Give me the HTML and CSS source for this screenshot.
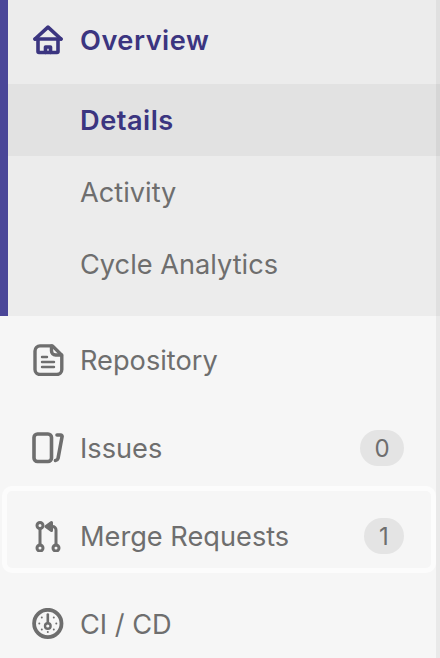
FILE: index.html
```html
<!DOCTYPE html>
<html lang="en">
<head>
<meta charset="utf-8">
<title>Sidebar</title>
<link rel="stylesheet" href="styles.css">
</head>
<body>
<nav class="sidebar">
  <section class="group">
    <a class="row row-head">
      <svg class="icon" viewBox="0 0 32 32" fill="none" stroke="currentColor" stroke-width="3.600" stroke-linejoin="round" stroke-linecap="round"><path d="M3 15 16 3.200 29 15"/><path d="M3 15h26"/><path d="M6 15v12.500a1 1 0 0 0 1 1h18a1 1 0 0 0 1-1V15"/><path d="M13.500 28.500V23h5v5.500"/></svg>
      <span class="label">Overview</span>
    </a>
    <a class="sub sub-active">Details</a>
    <a class="sub">Activity</a>
    <a class="sub">Cycle Analytics</a>
  </section>
  <a class="row">
    <svg class="icon" viewBox="0 0 32 32" fill="none" stroke="currentColor" stroke-width="3.400" stroke-linejoin="round" stroke-linecap="round"><path d="M8 1.900h12.500l9.300 9.300v14.300a5 5 0 0 1-5 5H8a5 5 0 0 1-5-5V6.900a5 5 0 0 1 5-5z"/><path d="M19.500 2v5a4 4 0 0 0 4 4h6"/><path class="thin" d="M10 13h5M10 18h12M10 23h12"/></svg>
    <span class="label">Repository</span>
  </a>
  <a class="row">
    <svg class="icon" viewBox="0 0 32 32" fill="none" stroke="currentColor" stroke-width="3.600" stroke-linejoin="round" stroke-linecap="round"><rect x="2" y="2" width="17.500" height="27.500" rx="3.500"/><path d="M25 3h3.500a1.500 1.500 0 0 1 1.500 2L26 26.500a3 3 0 0 1-2.500 2"/></svg>
    <span class="label">Issues</span>
    <span class="badge">0</span>
  </a>
  <a class="row row-outlined">
    <svg class="icon" viewBox="0 0 32 32" fill="none" stroke="currentColor" stroke-width="3" stroke-linejoin="round" stroke-linecap="round"><circle cx="8" cy="5.500" r="3"/><circle cx="8" cy="28" r="3"/><circle cx="24" cy="28" r="3"/><path d="M8 8.500V25M24 25V10a3.500 3.500 0 0 0-3.500-3.500H17"/><path d="M19.500 2.500 14 6.500l5.500 4z" fill="currentColor"/></svg>
    <span class="label">Merge Requests</span>
    <span class="badge badge-round">1</span>
  </a>
  <a class="row">
    <svg class="icon" viewBox="0 0 32 32" fill="none" stroke="currentColor" stroke-width="3.800" stroke-linecap="round"><circle cx="15.800" cy="15.500" r="13.700"/><path class="dots" d="M9.800 9.500v.01M21.800 9.500v.01M7.300 15.500v.01M24.300 15.500v.01M9.800 21.500v.01M21.800 21.500v.01M15.800 24v.01"/><circle class="thin" cx="15.800" cy="18" r="2.800"/><path class="needle" d="M15.800 6.500v8"/></svg>
    <span class="label">CI / CD</span>
  </a>
</nav>
</body>
</html>
```
FILE: styles.css
```css
* {
  box-sizing: border-box;
}

html,
body {
  margin: 0;
  height: 100%;
  overflow: hidden;
  background: #f6f6f6;
}

.sidebar {
  position: relative;
  width: 440px;
  height: 658px;
  background: #f6f6f6;
  font-family: Inter, "Liberation Sans", sans-serif;
  font-size: 27.2px;
  color: #6e6e6e;
}

.sidebar::after {
  content: "";
  position: absolute;
  top: 0;
  right: 0;
  bottom: 0;
  width: 4px;
  background: rgba(0, 0, 0, 0.05);
}

.group {
  background: #ececec;
  border-left: 8px solid #4a4698;
  padding-bottom: 16px;
}

.row {
  display: flex;
  align-items: center;
  height: 88px;
  padding: 0 36px 0 32px;
}

.group .row {
  height: 84px;
  padding: 0 0 4px 24px;
}

.row-head,
.sub-active {
  color: #3b3580;
  font-weight: 600;
  letter-spacing: 0.5px;
}

.row-outlined {
  position: relative;
}

.row-outlined::before {
  content: "";
  position: absolute;
  top: -6px;
  bottom: 7px;
  left: 2px;
  width: 424px;
  border: 5px solid #fcfcfc;
  border-radius: 10px;
}

.icon {
  width: 32px;
  height: 32px;
  flex: none;
  margin-right: 16px;
  position: relative;
}

.thin {
  stroke-width: 2.400;
}

.needle {
  stroke-width: 2.600;
}

.dots {
  stroke-width: 2;
}

.label {
  flex: 1;
  position: relative;
}

.sub {
  display: flex;
  align-items: center;
  height: 72px;
  padding-left: 72px;
}

.sub-active {
  background: #e2e2e2;
}

.badge {
  min-width: 44px;
  height: 36px;
  border-radius: 18px;
  background: #e4e4e4;
  display: flex;
  align-items: center;
  justify-content: center;
  font-size: 24px;
  position: relative;
}

.badge-round {
  min-width: 40px;
}
```
